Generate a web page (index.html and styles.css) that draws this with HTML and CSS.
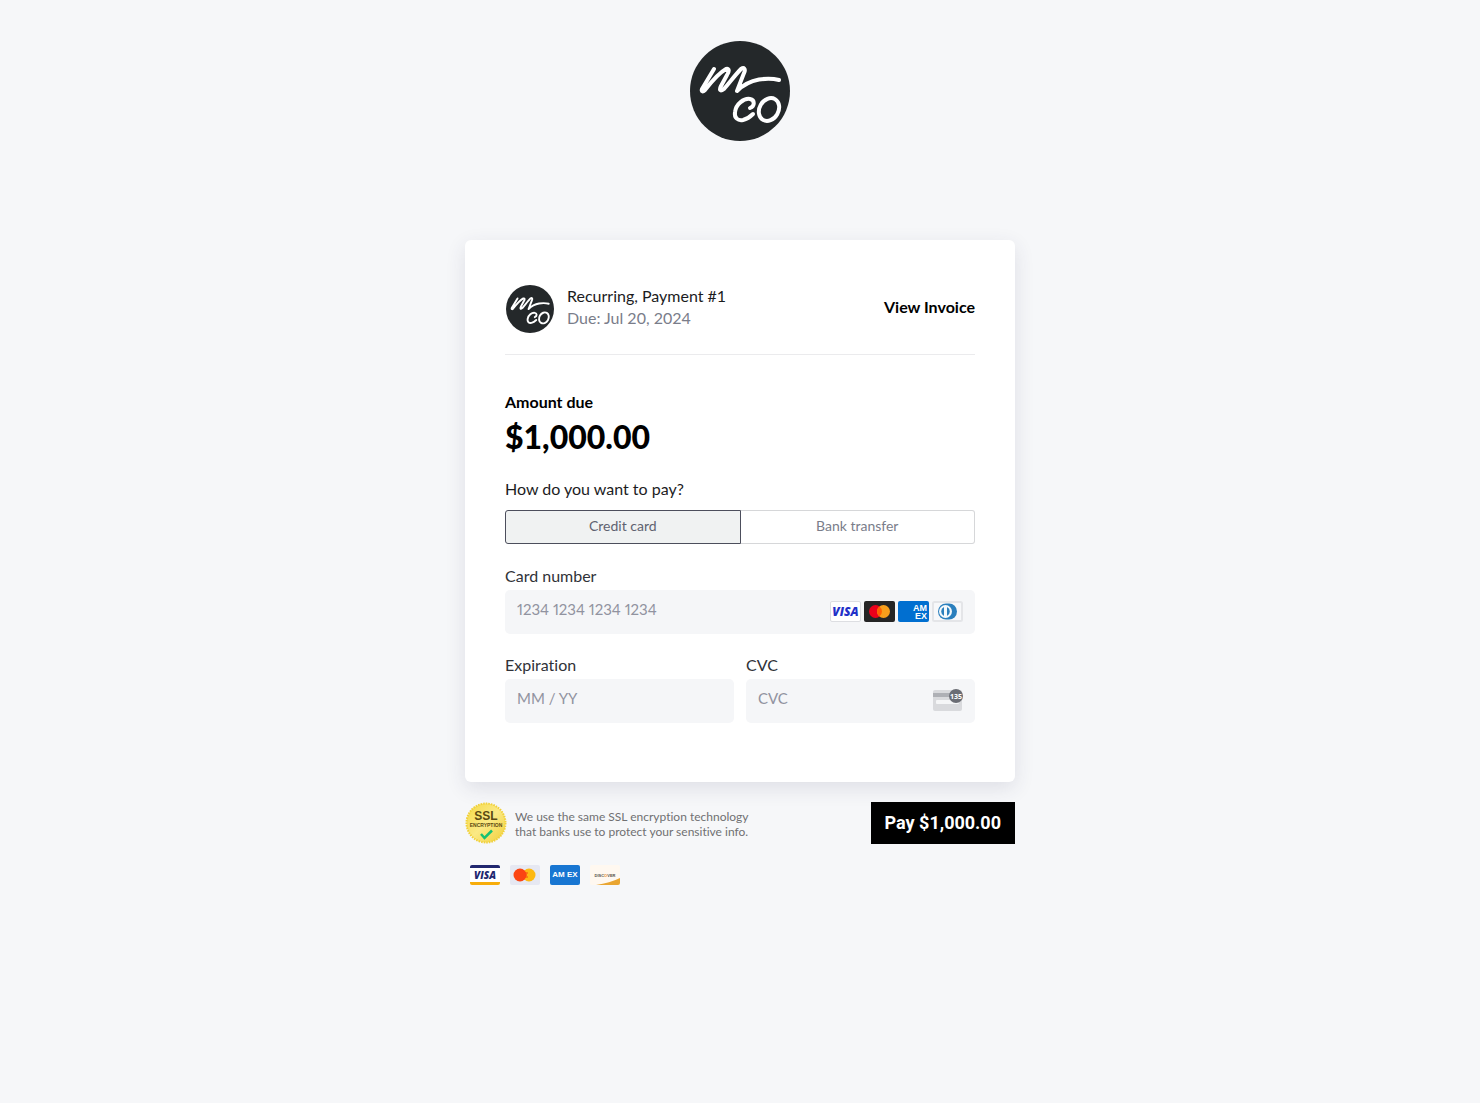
FILE: index.html
```html
<!DOCTYPE html>
<html lang="en">
<head>
<meta charset="utf-8">
<meta name="viewport" content="width=device-width, initial-scale=1">
<title>Pay invoice</title>
<link rel="stylesheet" href="styles.css">
</head>
<body>
<svg class="defs" aria-hidden="true">
  <symbol id="logo" viewBox="0 0 100 100">
    <circle cx="50" cy="50" r="50" fill="#24282a"/>
    <g fill="none" stroke="#fff" stroke-width="4" stroke-linecap="round" stroke-linejoin="round">
      <path d="M24 28L12 48C11 51 13 51 15 49C22 40 29 32 36 28C40 27 39 31 37 34L31 45C29 49 30 51 34 48C40 41 46 33 51 28C54 26 56 28 54 32L47 50C54 43 61 40 69 38.500C76 37.500 83 37.500 89 39"/>
      <path d="M60 67C65 65 65 59 60 58C54 57 46 63 45 71C44 77 48 80 53 79C57 78 60 76 63 73"/>
      <ellipse cx="79" cy="68.500" rx="9.500" ry="12" transform="rotate(30 79 68.500)"/>
    </g>
  </symbol>
</svg>
<header class="brand">
  <svg class="brand-logo" role="img" aria-label="M Co"><use href="#logo"/></svg>
</header>
<main class="checkout">
  <section class="card">
    <div class="summary">
      <svg class="avatar" aria-hidden="true"><use href="#logo"/></svg>
      <div class="summary-text">
        <div>Recurring, Payment #1</div>
        <div class="muted">Due: Jul 20, 2024</div>
      </div>
      <a class="view-invoice" href="#">View Invoice</a>
    </div>
    <div class="amount-label">Amount due</div>
    <div class="amount">$1,000.00</div>
    <div class="question">How do you want to pay?</div>
    <div class="methods">
      <button type="button" class="method selected">Credit card</button>
      <button type="button" class="method">Bank transfer</button>
    </div>
    <div class="field">
      <label for="number">Card number</label>
      <div class="control">
        <input id="number" type="text" placeholder="1234 1234 1234 1234">
        <div class="brands" aria-hidden="true">
          <svg width="31" height="21" viewBox="0 0 31 21"><rect x=".5" y=".5" width="30" height="20" rx="1.5" fill="#fff" stroke="#dddee2"/><text x="15.500" y="15" text-anchor="middle" class="mark" font-size="12" fill="#2230c8">VISA</text></svg>
          <svg width="31" height="21" viewBox="0 0 31 21"><rect width="31" height="21" rx="2" fill="#252525"/><circle cx="11.500" cy="10.500" r="6.500" fill="#eb001b"/><circle cx="19.500" cy="10.500" r="6.500" fill="#f79e1b"/><path d="M15.500 5.400a6.500 6.500 0 0 1 0 10.200a6.500 6.500 0 0 1 0-10.200" fill="#ff5f00"/></svg>
          <svg width="31" height="21" viewBox="0 0 31 21"><rect width="31" height="21" rx="2" fill="#016fd0"/><g class="outline"><text x="15" y="10">AM</text><text x="17" y="18">EX</text></g></svg>
          <svg width="31" height="21" viewBox="0 0 31 21"><rect x="1" y="1" width="29" height="19" rx="1.500" fill="#f7f8fa" stroke="#e4e5e8" stroke-width="2"/><path d="M14 2.500h3a8 8 0 0 1 0 16h-3a8 8 0 0 1 0-16" fill="#2a7fbd"/><circle cx="13.500" cy="10.500" r="6.500" fill="#f4f8fb"/><path d="M12 6a5 5 0 0 0 0 9zM15 6a5 5 0 0 1 0 9z" fill="#2a7fbd"/></svg>
        </div>
      </div>
    </div>
    <div class="field-row">
      <div class="field">
        <label for="expiry">Expiration</label>
        <div class="control"><input id="expiry" type="text" placeholder="MM / YY"></div>
      </div>
      <div class="field">
        <label for="cvc">CVC</label>
        <div class="control">
          <input id="cvc" type="text" placeholder="CVC">
          <svg width="30" height="24" viewBox="0 0 30 24" aria-hidden="true"><rect y="2" width="29" height="21" rx="2" fill="#d9dadd"/><path d="M0 5h29v4H0z" fill="#aeb0b5"/><rect x="3" y="12" width="23" height="4" rx="1" fill="#f5f6f7"/><circle cx="23" cy="8" r="7" fill="#6b6d74"/><text x="23" y="11" text-anchor="middle" class="digits">135</text></svg>
        </div>
      </div>
    </div>
  </section>
  <footer class="actions">
    <svg class="seal" width="42" height="42" viewBox="0 0 42 42" aria-hidden="true">
      <defs><linearGradient id="gold" x2="1" y2="1"><stop offset="0" stop-color="#f4d944"/><stop offset=".5" stop-color="#fbe985"/><stop offset="1" stop-color="#f1cf38"/></linearGradient></defs>
      <circle cx="21" cy="21" r="19.500" fill="url(#gold)"/><circle cx="21" cy="21" r="19.500" fill="none" stroke="#f1d13b" stroke-width="2" stroke-dasharray="1.600 1"/>
      <text x="21" y="18" text-anchor="middle" class="seal-ssl">SSL</text>
      <text x="21" y="25" text-anchor="middle" class="seal-enc">ENCRYPTION</text>
      <path d="M16 32l3.500 4l7.500-7.500" fill="none" stroke="#16c172" stroke-width="2.500"/>
    </svg>
    <p class="ssl-note">We use the same SSL encryption technology<br>that banks use to protect your sensitive info.</p>
    <button type="submit" class="pay">Pay $1,000.00</button>
  </footer>
  <div class="accepted" aria-hidden="true">
    <svg width="30" height="20" viewBox="0 0 30 20"><rect width="30" height="20" rx="2" fill="#fff"/><path d="M0 3V2q0-2 2-2h26q2 0 2 2v1z" fill="#21276f"/><path d="M0 17v1q0 2 2 2h26q2 0 2-2v-1z" fill="#f7ad0b"/><text x="15" y="14" text-anchor="middle" class="mark" font-size="10" fill="#21276f">VISA</text></svg>
    <svg width="30" height="20" viewBox="0 0 30 20"><rect width="30" height="20" rx="2" fill="#e6e8f2"/><circle cx="19" cy="10" r="6.500" fill="#fdb913"/><circle cx="10" cy="10" r="6.500" fill="#fb4413"/><path d="M13 8h5M12 10h5M13 12h5" stroke="#fb4413" stroke-width="1"/></svg>
    <svg width="30" height="20" viewBox="0 0 30 20"><rect width="30" height="20" rx="2" fill="#1876d2"/><text x="15" y="12" text-anchor="middle" class="amex">AM EX</text></svg>
    <svg width="30" height="20" viewBox="0 0 30 20"><rect width="30" height="20" rx="2" fill="#fff8f0"/><path d="M6 20Q20 18 30 13v5q0 2-2 2z" fill="#e9a531"/><text x="15" y="12" text-anchor="middle" class="disc">DISC<tspan fill="#ec8b1c">O</tspan>VER</text></svg>
  </div>
</main>
</body>
</html>
```
FILE: styles.css
```css
* { box-sizing: border-box; }
body {
  margin: 0;
  min-height: 100vh;
  background: #f6f7f9;
  color: #1c1c1e;
  font: 16px/22px Lato, "Open Sans", sans-serif;
  font-variant-ligatures: none;
}
svg { display: block; flex: none; }
button, input { font: inherit; }
.defs { position: absolute; width: 0; height: 0; }
.brand { display: flex; justify-content: center; padding: 41px 0 99px; }
.brand-logo { width: 100px; height: 100px; }
.checkout { width: 100%; max-width: 550px; margin: 0 auto; }
.card {
  padding: 44px 40px 59px;
  background: #fff;
  border-radius: 6px;
  box-shadow: 0 6px 20px rgba(50, 50, 93, .12);
}
.summary {
  display: flex;
  align-items: center;
  gap: 12px;
  padding-bottom: 20px;
  border-bottom: 1px solid #ebebed;
}
.avatar { width: 50px; height: 50px; padding: 1px; }
.summary-text { flex: 1; padding-bottom: 4px; }
.muted { color: #7a7d8a; }
.view-invoice { padding-bottom: 4px; color: #000; font-weight: 700; text-decoration: none; }
.amount-label { margin-top: 36px; color: #000; font-weight: 700; }
.amount { margin-top: 4px; color: #000; font-size: 32px; line-height: 40px; font-weight: 900; }
.question { margin-top: 21px; }
.methods { display: flex; margin: 10px 0 21px; }
.method {
  flex: 1;
  height: 34px;
  padding: 0 0 2px;
  border: 1px solid #d6d7d9;
  border-left: 0;
  border-radius: 0 3px 3px 0;
  background: #fff;
  color: #7a7d8a;
  font-size: 14px;
}
.method.selected {
  border: 1px solid #4c4e5c;
  border-radius: 3px 0 0 3px;
  background: #f0f2f2;
  color: #606270;
}
.field { flex: 1; min-width: 0; }
.field label { display: block; margin-bottom: 4px; color: #303238; line-height: 21px; }
.control {
  display: flex;
  align-items: center;
  height: 44px;
  padding: 0 12px 2px;
  border-radius: 5px;
  background: #f5f6f8;
}
.control input {
  flex: 1;
  min-width: 0;
  height: 100%;
  padding: 0 0 4px;
  border: 0;
  outline: 0;
  background: none;
  font-size: 15px;
  font-variant-numeric: proportional-nums;
}
.control input::placeholder { color: #9193a0; opacity: 1; }
.brands { display: flex; gap: 3px; }
.field-row { display: flex; gap: 12px; margin-top: 20px; }
.mark { font-family: "Open Sans", sans-serif; font-weight: 800; font-style: italic; }
.outline { fill: #fff; font: 700 9px "Liberation Sans", sans-serif; }
.digits { fill: #fff; font: 700 7px "Open Sans", sans-serif; }
.actions { display: flex; align-items: center; margin-top: 20px; }
.seal-ssl { fill: #5b4a12; font: 700 12px "Liberation Sans", sans-serif; }
.seal-enc { fill: #5b4a12; font: 700 5px "Liberation Sans", sans-serif; }
.ssl-note { flex: 1; margin: 1px 0 0 8px; color: #707072; font-size: 12px; line-height: 15px; }
.pay {
  height: 42px;
  padding: 0 14px 2px;
  border: 0;
  background: #000;
  color: #fff;
  font: 700 18px Roboto, sans-serif;
}
.accepted { display: flex; gap: 10px; margin: 21px 0 0 5px; }
.amex { fill: #fff; font: 700 8px "Liberation Sans", sans-serif; }
.disc { fill: #55504c; font: 700 4px "Liberation Sans", sans-serif; }
```
